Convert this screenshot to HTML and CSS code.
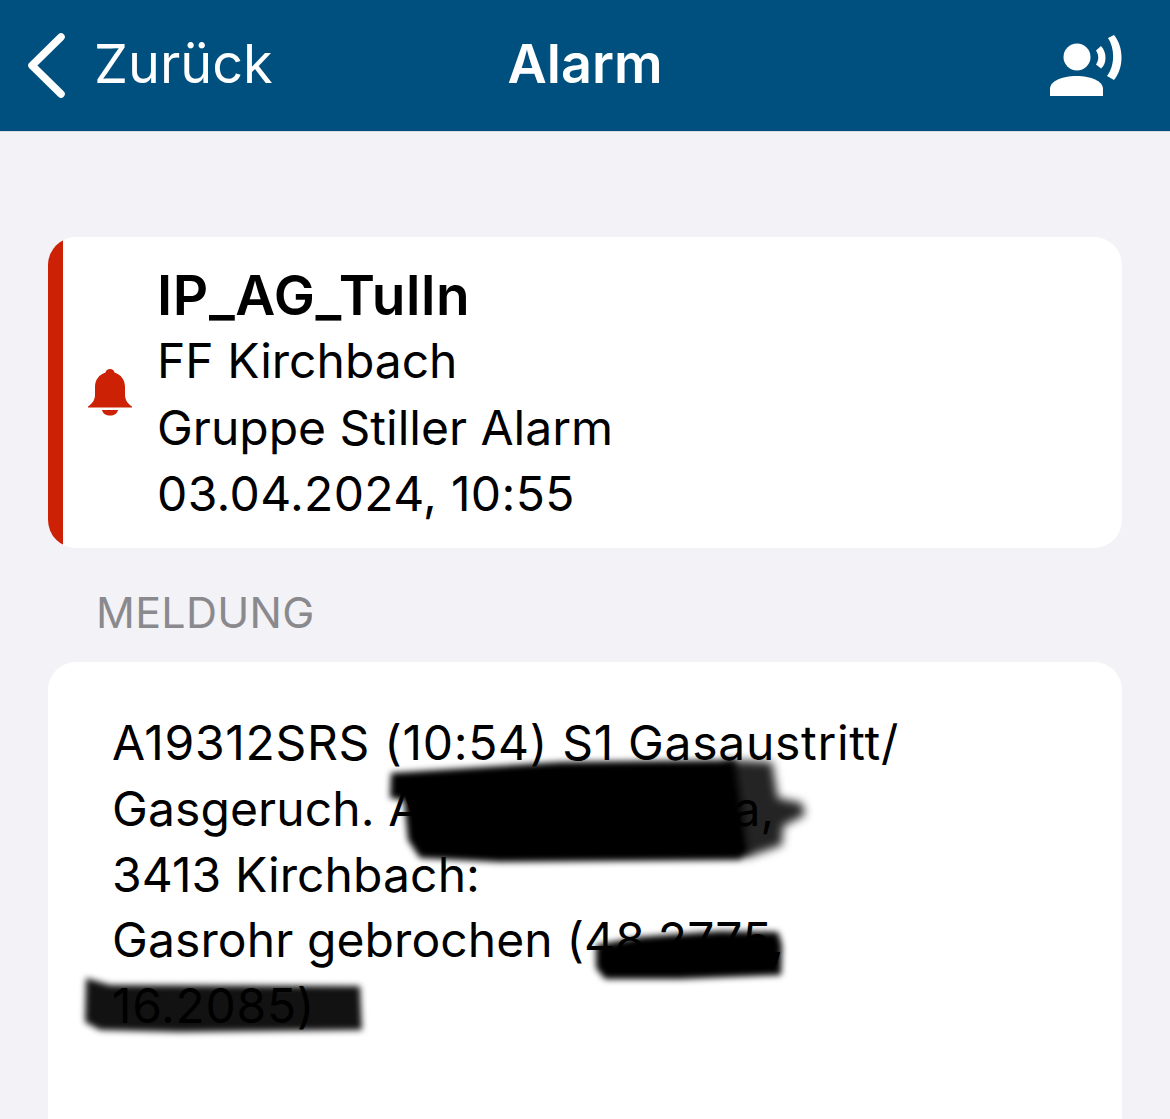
FILE: index.html
```html
<!DOCTYPE html>
<html lang="de">
<head>
    <meta charset="UTF-8">
    <meta name="viewport" content="width=device-width, initial-scale=1.0">
    <title>Alarm</title>
    <link rel="stylesheet" href="styles.css">
</head>
<body>
    <header class="topbar">
        <a class="back">
            <svg class="back-icon" viewBox="0 0 40 66" width="40" height="66">
                <path d="M34 4 L5 32.500 L34 61" fill="none" stroke="#fff" stroke-width="7.500" stroke-linecap="round" stroke-linejoin="round"/>
            </svg>
            <span class="back-label">Zurück</span>
        </a>
        <h1 class="title">Alarm</h1>
        <svg class="speak-icon" viewBox="0 0 74 62" width="74" height="62">
            <circle cx="29" cy="22" r="13.500" fill="#fff"/>
            <path d="M2 61 V54 C2 46 14 41 28.500 41 C43 41 55 46 55 54 V61 Z" fill="#fff"/>
            <path d="M48 15.500 L53 11 C59 17 59 29 53 33.500 L48 29.500 C51 25 51 20 48 15.500 Z" fill="#fff"/>
            <path d="M60 3 L66 0 C76 12 76 33 66 45 L59 41 C67 31 67 13 60 3 Z" fill="#fff"/>
        </svg>
    </header>

    <main class="content">
        <section class="card alarm">
            <div class="alarm-bar"></div>
            <div class="alarm-icon">
                <svg viewBox="0 0 46 47" width="46" height="47">
                    <path d="M23 0 C25.500 0 27 1.500 27.500 3.500 C34 5.500 38 11 38 18 V26 C38 31 41 35 45 37.500 V38.500 H1 V37.500 C5 35 8 31 8 26 V18 C8 11 12 5.500 18.500 3.500 C19 1.500 20.500 0 23 0 Z" fill="#cc2105"/>
                    <path d="M15 41 H31 C30 45 27 46.500 23 46.500 C19 46.500 16 45 15 41 Z" fill="#cc2105"/>
                </svg>
            </div>
            <div class="alarm-text">
                <h2>IP_AG_Tulln</h2>
                <p>FF Kirchbach</p>
                <p>Gruppe Stiller Alarm</p>
                <p class="date">03.04.2024, 10:55</p>
            </div>
        </section>

        <h3 class="section-label">MELDUNG</h3>

        <section class="card message">
            <p><span class="wide">A19312SRS (10:54) S1 Gasaustritt/</span><br>
            Gasgeruch. A<span class="hidden-part"></span>a,<br>
            3413 Kirchbach:<br>
            Gasrohr gebrochen (48.2775,<br>
            <span class="wide">16.2085)</span></p>
        </section>
    </main>

    <!-- geschwärzte Stellen, liegen über dem Text -->
    <svg class="redactions" viewBox="0 0 1170 1119" width="1170" height="1119">
        <defs>
            <filter id="soft" x="-10%" y="-20%" width="120%" height="140%">
                <feGaussianBlur stdDeviation="3"/>
            </filter>
            <filter id="softer" x="-20%" y="-20%" width="140%" height="140%">
                <feGaussianBlur stdDeviation="5"/>
            </filter>
        </defs>
        <path d="M725 760 L772 762 L778 798 L802 803 L805 815 L783 826 L782 845 L745 858 Z" fill="#000" fill-opacity="0.86" filter="url(#softer)"/>
        <g filter="url(#soft)">
            <path d="M391 773 L470 768 L560 762 L735 760 L750 852 L740 860 L500 862 L420 858 L408 840 L404 800 L390 798 Z" fill="#000"/>
            <path d="M596 945 L640 937 L720 931 L778 932 L782 945 L781 975 L680 979 L605 979 L596 968 Z" fill="#000"/>
            <path d="M86 978 L110 985 L360 986 L362 1030 L180 1032 L100 1030 L85 1022 Z" fill="#000" fill-opacity="0.93"/>
        </g>
    </svg>
</body>
</html>
```

FILE: styles.css
```css
html, body {
    height: 100%;
    overflow: hidden;
}
body {
    position: relative;
    margin: 0;
    font-family: Inter, "Liberation Sans", sans-serif;
    background-color: #f2f2f7;
    color: #000;
}
.topbar {
    display: grid;
    grid-template-columns: 1fr auto 1fr;
    align-items: center;
    height: 131px;
    padding: 0 27px;
    background-color: #00507f;
    border-bottom: 1px solid #d8dbe2;
    color: #fff;
}
.back {
    display: flex;
    align-items: center;
    gap: 27px;
    font-size: 54px;
}
.back-icon {
    flex: none;
}
.back-label {
    padding-bottom: 4px;
}
.title {
    margin: 0;
    padding-bottom: 4px;
    font-size: 54px;
    font-weight: 600;
}
.speak-icon {
    justify-self: end;
    margin-right: 21px;
}
.content {
    padding: 105px 48px 0;
}
.card {
    background-color: white;
    border-radius: 28px;
    overflow: hidden;
}
.alarm {
    display: flex;
    height: 311px;
}
.alarm-bar {
    flex: none;
    width: 15px;
    background-color: #cc2105;
}
.alarm-icon {
    flex: none;
    display: flex;
    align-items: center;
    justify-content: center;
    width: 94px;
}
.alarm-text {
    padding-top: 26px;
    font-size: 48px;
    line-height: 66.500px;
}
.alarm-text h2 {
    margin: 0;
    font-size: 55px;
    line-height: 65px;
    font-weight: 600;
    letter-spacing: 0.600px;
}
.alarm-text p {
    margin: 0;
}
.alarm-text .date {
    letter-spacing: 0.350px;
}
.section-label {
    margin: 0;
    padding: 39px 0 25px 48px;
    font-size: 43px;
    line-height: 50px;
    font-weight: 400;
    letter-spacing: 0.300px;
    color: #8a8a8e;
}
.message {
    min-height: 600px;
    padding: 48px 64px;
    font-size: 48px;
    line-height: 65.750px;
    letter-spacing: 0.100px;
}
.message p {
    margin: 0;
}
.message .wide {
    letter-spacing: 0.700px;
}
.hidden-part {
    display: inline-block;
    width: 312px;
}
.redactions {
    position: absolute;
    top: 0;
    left: 0;
    pointer-events: none;
}
```
